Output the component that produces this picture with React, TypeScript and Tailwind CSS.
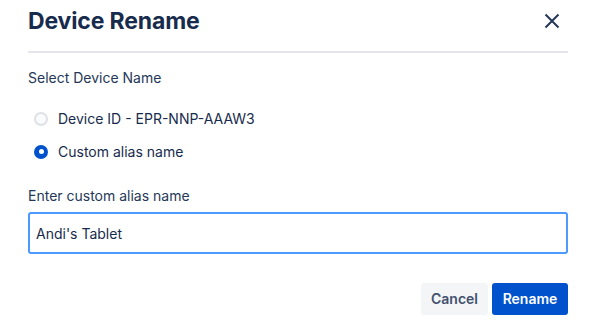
import { useState } from "react"

const FONT = { fontFamily: "Inter, 'Noto Sans', sans-serif" }

function Radio({ checked }: { checked: boolean }) {
  if (checked) {
    return (
      <span className="flex h-[14px] w-[14px] items-center justify-center rounded-full bg-[#0052CC]">
        <span className="h-[5px] w-[5px] rounded-full bg-white" />
      </span>
    )
  }
  return <span className="h-[14px] w-[14px] rounded-full border-2 border-[#DFE1E6] bg-[#FAFBFC]" />
}

export default function App() {
  const [choice, setChoice] = useState<"id" | "alias">("alias")
  const [alias, setAlias] = useState("Andi's Tablet")

  return (
    <div className="h-[326px] w-[596px] bg-white px-7 text-[#172B4D]" style={FONT}>
      {/* Header */}
      <div className="flex h-[42px] items-center justify-between">
        <h1 className="text-[23px] font-bold tracking-[-0.15px] text-[#172B4D]">Device Rename</h1>
        <button className="mr-[4px] flex h-6 w-6 items-center justify-center text-[#253858]">
          <svg width="16" height="16" viewBox="0 0 16 16" fill="none">
            <path d="M1.5 1.5L14.5 14.5M14.5 1.5L1.5 14.5" stroke="currentColor" strokeWidth="2" />
          </svg>
        </button>
      </div>
      <div className="mt-[9px] h-[2px] bg-[#E4E5EA]" />

      {/* Body */}
      <div className="mt-[15px] text-sm leading-5 text-[#253858]">Select Device Name</div>

      <div className="mt-[14px] flex flex-col">
        <label className="flex h-[33px] cursor-pointer items-center gap-[10px] pl-[6px]" onClick={() => setChoice("id")}>
          <Radio checked={choice === "id"} />
          <span className="text-sm text-[#172B4D]">Device ID - EPR-NNP-AAAW3</span>
        </label>
        <label className="flex h-[33px] cursor-pointer items-center gap-[10px] pl-[6px]" onClick={() => setChoice("alias")}>
          <Radio checked={choice === "alias"} />
          <span className="text-sm text-[#172B4D]">Custom alias name</span>
        </label>
      </div>

      <div className="mt-[18px] text-sm leading-5 text-[#253858]">Enter custom alias name</div>
      <input
        value={alias}
        onChange={(e) => setAlias(e.target.value)}
        className="mt-[6px] h-[42px] w-full rounded-[3px] border-2 border-[#4C9AFF] bg-white pl-[6px] text-sm text-[#172B4D] outline-none"
        style={FONT}
      />

      {/* Footer */}
      <div className="mt-[29px] flex justify-end gap-1">
        <button className="h-8 w-[67px] rounded-[3px] bg-[#F4F5F7] text-sm font-semibold text-[#42526E]">Cancel</button>
        <button className="h-8 w-[76px] rounded-[3px] bg-[#0052CC] text-sm font-semibold text-white">Rename</button>
      </div>
    </div>
  )
}
